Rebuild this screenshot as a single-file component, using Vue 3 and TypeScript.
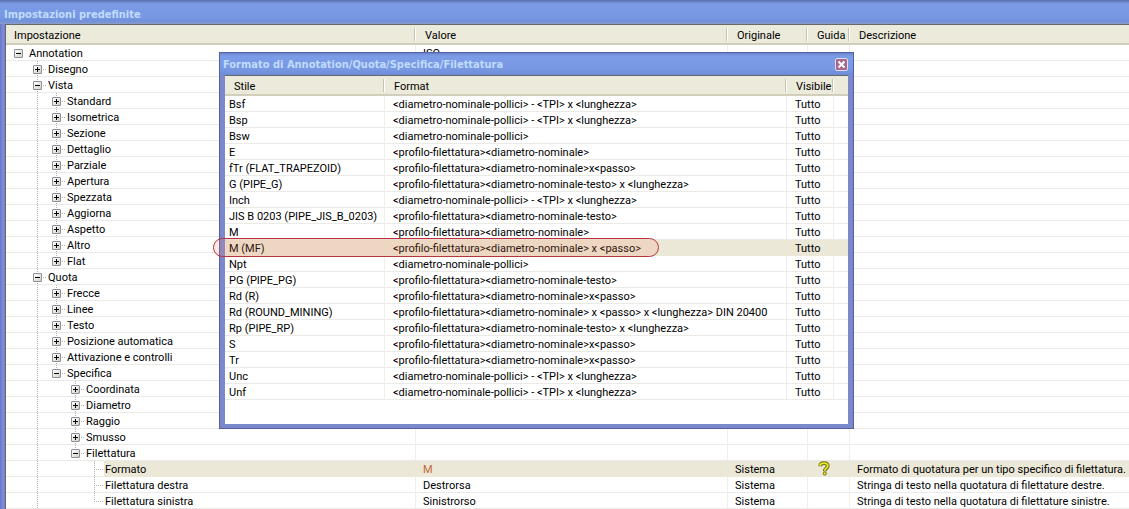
<script setup lang="ts">
import { ref } from 'vue'

interface Setting {
  label: string
  level: number
  state: 'open' | 'closed' | 'leaf'
  value?: string
  origin?: string
  help?: boolean
  description?: string
  selected?: boolean
  last?: boolean
}

const node = (label: string, level: number, state: Setting['state'] = 'closed', extra: Partial<Setting> = {}): Setting => ({
  label, level, state, ...extra,
})

const settings: Setting[] = [
  node('Annotation', 0, 'open', { value: 'ISO' }),
  node('Disegno', 1),
  node('Vista', 1, 'open'),
  ...['Standard', 'Isometrica', 'Sezione', 'Dettaglio', 'Parziale', 'Apertura', 'Spezzata', 'Aggiorna', 'Aspetto', 'Altro'].map(l => node(l, 2)),
  node('Flat', 2, 'closed', { last: true }),
  node('Quota', 1, 'open'),
  ...['Frecce', 'Linee', 'Testo', 'Posizione automatica', 'Attivazione e controlli'].map(l => node(l, 2)),
  node('Specifica', 2, 'open', { last: true }),
  ...['Coordinata', 'Diametro', 'Raggio', 'Smusso'].map(l => node(l, 3)),
  node('Filettatura', 3, 'open', { last: true }),
  node('Formato', 4, 'leaf', {
    value: 'M', origin: 'Sistema', help: true, selected: true,
    description: 'Formato di quotatura per un tipo specifico di filettatura.',
  }),
  node('Filettatura destra', 4, 'leaf', {
    value: 'Destrorsa', origin: 'Sistema', description: 'Stringa di testo nella quotatura di filettature destre.',
  }),
  node('Filettatura sinistra', 4, 'leaf', {
    value: 'Sinistrorso', origin: 'Sistema', last: true, description: 'Stringa di testo nella quotatura di filettature sinistre.',
  }),
]

// For each ancestor level, a guide is drawn while that level still has siblings below.
const rows = (() => {
  const ended: boolean[] = [true]
  return settings.map(s => {
    const guides = Array.from({ length: s.level }, (_, i) => !ended[i])
    if (s.level > 0) ended[s.level] = !!s.last
    return { ...s, guides }
  })
})()

const formats: [string, string][] = [
  ['Bsf', '<diametro-nominale-pollici> - <TPI> x <lunghezza>'],
  ['Bsp', '<diametro-nominale-pollici> - <TPI> x <lunghezza>'],
  ['Bsw', '<diametro-nominale-pollici>'],
  ['E', '<profilo-filettatura><diametro-nominale>'],
  ['fTr (FLAT_TRAPEZOID)', '<profilo-filettatura><diametro-nominale>x<passo>'],
  ['G (PIPE_G)', '<profilo-filettatura><diametro-nominale-testo> x <lunghezza>'],
  ['Inch', '<diametro-nominale-pollici> - <TPI> x <lunghezza>'],
  ['JIS B 0203 (PIPE_JIS_B_0203)', '<profilo-filettatura><diametro-nominale-testo>'],
  ['M', '<profilo-filettatura><diametro-nominale>'],
  ['M (MF)', '<profilo-filettatura><diametro-nominale> x <passo>'],
  ['Npt', '<diametro-nominale-pollici>'],
  ['PG (PIPE_PG)', '<profilo-filettatura><diametro-nominale-testo>'],
  ['Rd (R)', '<profilo-filettatura><diametro-nominale>x<passo>'],
  ['Rd (ROUND_MINING)', '<profilo-filettatura><diametro-nominale> x <passo> x <lunghezza> DIN 20400'],
  ['Rp (PIPE_RP)', '<profilo-filettatura><diametro-nominale-testo> x <lunghezza>'],
  ['S', '<profilo-filettatura><diametro-nominale>x<passo>'],
  ['Tr', '<profilo-filettatura><diametro-nominale>x<passo>'],
  ['Unc', '<diametro-nominale-pollici> - <TPI> x <lunghezza>'],
  ['Unf', '<diametro-nominale-pollici> - <TPI> x <lunghezza>'],
]

const dialogOpen = ref(true)
const activeStyle = ref('M (MF)')
</script>

<template>
  <main class="window">
    <h1 class="title">Impostazioni predefinite</h1>
    <div class="pane">
      <table class="grid settings">
        <colgroup>
          <col class="c-name"><col class="c-value"><col class="c-origin"><col class="c-help"><col>
        </colgroup>
        <thead>
          <tr>
            <th>Impostazione</th><th>Valore</th><th>Originale</th><th>Guida</th><th>Descrizione</th>
          </tr>
        </thead>
        <tbody>
          <tr v-for="(r, i) in rows" :key="i" :class="{ selected: r.selected }">
            <td class="tree-cell">
              <div class="tree">
                <span v-for="(g, k) in r.guides" :key="k" class="slot" :class="{ line: g }"></span>
                <span class="slot" :class="{ line: r.level > 0 && !r.last, half: r.level > 0 && r.last, arm: r.level > 0 }">
                  <button v-if="r.state !== 'leaf'" type="button" class="toggle" :aria-label="r.label" :aria-expanded="r.state === 'open'">
                    <svg viewBox="0 0 7 7" width="7" height="7" shape-rendering="crispEdges">
                      <path d="M1 3h5v1H1z" fill="#000" />
                      <path v-if="r.state === 'closed'" d="M3 1h1v5H3z" fill="#000" />
                    </svg>
                  </button>
                </span>
                <span class="label">{{ r.label }}</span>
              </div>
            </td>
            <td :class="{ changed: r.selected }">{{ r.value }}</td>
            <td>{{ r.origin }}</td>
            <td class="help">
              <svg v-if="r.help" viewBox="0 0 14 16" width="14" height="16" role="img" aria-label="Guida">
                <path d="M3 5.500C3 2.700 5 2.200 7 2.200s4 .8 4 3.100C11 7.800 7.800 7.600 7.800 10.800" fill="none" stroke="#6a6a10" stroke-width="4" />
                <path d="M2.500 5C3 3 5 2.300 7 2.300s4 .7 4 3C11 7.800 7.800 7.600 7.800 10.300" fill="none" stroke="#e6e622" stroke-width="2" />
                <circle cx="7.800" cy="13.300" r="1.700" fill="#e6e622" stroke="#6a6a10" />
              </svg>
            </td>
            <td>{{ r.description }}</td>
          </tr>
        </tbody>
      </table>
    </div>

    <section v-if="dialogOpen" class="dialog" role="dialog" aria-labelledby="dialog-title">
      <header class="dialog-bar">
        <h2 id="dialog-title" class="title">Formato di Annotation/Quota/Specifica/Filettatura</h2>
        <button type="button" class="close" aria-label="Chiudi" @click="dialogOpen = false">
          <svg viewBox="0 0 11 11" width="11" height="11"><path d="M2.500 2.500l6 6M8.500 2.500l-6 6" stroke="#fff" stroke-width="2" /></svg>
        </button>
      </header>
      <div class="dialog-body">
        <table class="grid formats">
          <colgroup>
            <col class="c-style"><col class="c-format"><col class="c-visible"><col>
          </colgroup>
          <thead>
            <tr><th>Stile</th><th>Format</th><th>Visibile</th><th></th></tr>
          </thead>
          <tbody>
            <tr v-for="[style, format] in formats" :key="style" :class="{ selected: style === activeStyle }" @click="activeStyle = style">
              <td>{{ style }}</td><td>{{ format }}</td><td>Tutto</td><td></td>
            </tr>
          </tbody>
        </table>
      </div>
      <div class="marker"></div>
    </section>
  </main>
</template>

<style>
body {
  margin: 0;
  overflow: hidden;
}
</style>

<style scoped>
.window {
  position: relative;
  box-sizing: border-box;
  min-height: 100vh;
  padding-left: 5px;
  background: linear-gradient(90deg, #6a74c4 0, #7f8cdc 3px, #7482c8 5px, #fff 5px);
  color: #000;
  font: 11px/13px Roboto, Tahoma, sans-serif;
}
.title {
  margin: 0;
  color: #c0dcfc;
  font-family: "DejaVu Sans Condensed", Tahoma, sans-serif;
  font-size: 11px;
  font-weight: bold;
  line-height: 22px;
  white-space: nowrap;
}
.window > .title {
  box-sizing: border-box;
  height: 24px;
  margin-left: -5px;
  padding: 4px 0 0 4px;
  line-height: 22px;
  background: linear-gradient(#5a70a8 0, #6c88d0 2px, #7c9ae6 4px, #7898e2 17px, #7090dc 21px, #8a9cc8 24px);
}
.pane {
  border-top: 1px solid #66686c;
  border-left: 1px solid #66686c;
}
.grid {
  width: 100%;
  table-layout: fixed;
  border-collapse: separate;
  border-spacing: 0;
}
.grid th {
  box-sizing: border-box;
  height: 20px;
  padding: 2px 0 0 9px;
  border-bottom: 2px solid #d2cebc;
  background: #ebeadb;
  font-weight: normal;
  text-align: left;
  white-space: nowrap;
}
.grid th:not(:last-child) {
  background: linear-gradient(#c6c3b2, #c6c3b2) right 1px center / 1px 13px no-repeat,
    linear-gradient(#fff, #fff) right center / 1px 13px no-repeat, #ebeadb;
}
.settings th:first-child {
  padding-left: 8px;
}
.grid td {
  box-sizing: border-box;
  height: 16px;
  padding: 2px 0 0 8px;
  border-bottom: 1px solid #eceae6;
  border-right: 1px solid #efeee9;
  white-space: nowrap;
}
.settings td {
  padding-left: 7px;
}
.grid td:last-child {
  border-right: 0;
}
.grid .selected td {
  border-color: #ebe8d8;
  background: #ebe8d8;
}
.c-name { width: 410px; }
.c-value { width: 312px; }
.c-origin { width: 80px; }
.c-help { width: 42px; }
.c-style { width: 160px; }
.c-format { width: 402px; }
.c-visible { width: 47px; }

.grid .tree-cell {
  padding: 0 0 0 3px;
}
.grid .selected .tree-cell {
  border-bottom-color: #eceae6;
  background: none;
}
.tree {
  display: flex;
  height: 15px;
}
.slot {
  display: flex;
  align-items: center;
  justify-content: center;
  flex: none;
  width: 19px;
  height: 17px;
  background-repeat: no-repeat;
}
.line {
  background-image: repeating-linear-gradient(#b4b4b4 0 1px, transparent 1px 2px);
  background-position: 9px 0;
  background-size: 1px 16px;
}
.arm {
  background-image: repeating-linear-gradient(#b4b4b4 0 1px, transparent 1px 2px),
    repeating-linear-gradient(90deg, #b4b4b4 0 1px, transparent 1px 2px);
  background-position: 9px 0, 9px 8px;
  background-size: 1px 16px, 10px 1px;
}
.arm.half {
  background-size: 1px 8px, 10px 1px;
}
.toggle {
  display: block;
  width: 9px;
  height: 9px;
  padding: 0;
  border: 1px solid #8c9098;
  border-radius: 1px;
  background: linear-gradient(135deg, #fff, #d4d0c4);
}
.toggle svg {
  display: block;
}
.label {
  flex: 1;
  box-sizing: border-box;
  height: 16px;
  padding: 2px 0 0 1px;
}
.selected .label {
  background: #ebe8d8;
}
.grid .changed {
  color: #c06a30;
}
.grid .help {
  padding: 0 0 0 9px;
}
.help svg {
  display: block;
  height: 15px;
}

.dialog {
  position: absolute;
  top: 52px;
  left: 219px;
  box-sizing: border-box;
  width: 635px;
  padding: 0 5px 4px;
  border: 1px solid #5560a4;
  background: #7c88cc;
}
.dialog-bar {
  display: flex;
  align-items: center;
  justify-content: space-between;
  height: 22px;
  margin: 0 -5px;
  padding: 0 5px 0 3px;
  background: linear-gradient(#6a84c8 0, #7c9ce8 3px, #7898e2 16px, #6c8cd8 22px);
}
.dialog-bar .title {
  padding-top: 2px;
}
.close {
  width: 13px;
  height: 13px;
  padding: 0;
  border: 1px solid #dcdcf4;
  border-radius: 2px;
  background: #a8688c;
}
.close svg {
  display: block;
}
.dialog-body {
  padding-bottom: 24px;
  border-top: 1px solid #66686c;
  background: #fff;
}
.formats td:first-child {
  padding-left: 4px;
}
.marker {
  position: absolute;
  top: 185px;
  left: -7px;
  box-sizing: border-box;
  width: 446px;
  height: 19px;
  border: 1px solid #b8343c;
  border-radius: 10px;
  background: rgba(255, 130, 80, 0.16);
  pointer-events: none;
}
</style>
